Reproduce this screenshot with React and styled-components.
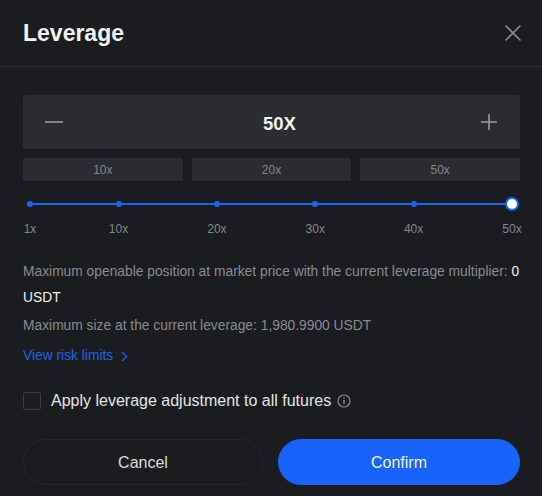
import React, { useState } from 'react'
import styled, { createGlobalStyle } from 'styled-components'

const Global = createGlobalStyle`
    html, body {
        margin: 0;
        padding: 0;
        background: #1b1c20;
    }
    body {
        font-family: "Liberation Sans", Arial, sans-serif;
        color: #e6e6e8;
    }
`

const MARKS = [1, 10, 20, 30, 40, 50]
const PRESETS = [10, 20, 50]

function Leverage() {
    const [value, setValue] = useState(50)
    const [applyAll, setApplyAll] = useState(false)
    const pct = ((value - 1) / 49) * 100

    return (
        <Modal>
            <Header>
                <Title>Leverage</Title>
                <Close aria-label='close'>
                    <svg width='16' height='16' viewBox='0 0 16 16'>
                        <path d='M1 1L15 15M15 1L1 15' stroke='#8a8b90' strokeWidth='1.6' strokeLinecap='round' />
                    </svg>
                </Close>
            </Header>
            <Body>
                <Stepper>
                    <StepBtn onClick={() => setValue(Math.max(1, value - 1))}>
                        <svg width='18' height='18' viewBox='0 0 18 18'>
                            <path d='M0 9H18' stroke='#9a9ba0' strokeWidth='1.6' />
                        </svg>
                    </StepBtn>
                    <StepValue>{value}X</StepValue>
                    <StepBtn onClick={() => setValue(Math.min(50, value + 1))}>
                        <svg width='18' height='18' viewBox='0 0 18 18'>
                            <path d='M1 9H17M9 1V17' stroke='#9a9ba0' strokeWidth='1.6' />
                        </svg>
                    </StepBtn>
                </Stepper>

                <Presets>
                    {PRESETS.map(p => (
                        <Preset key={p} onClick={() => setValue(p)}>{p}x</Preset>
                    ))}
                </Presets>

                <Slider>
                    <Track>
                        <Fill style={{ width: `${pct}%` }} />
                        {MARKS.map(m => (
                            <Tick key={m} style={{ left: `${((m - 1) / 49) * 100}%` }} />
                        ))}
                        <Thumb style={{ left: `${pct}%` }} />
                    </Track>
                    <Marks>
                        {MARKS.map(m => (
                            <Mark key={m} style={{ left: `${((m - 1) / 49) * 100}%` }}>{m}x</Mark>
                        ))}
                    </Marks>
                </Slider>

                <Info>
                    Maximum openable position at market price with the current leverage multiplier: <Strong>0</Strong> <Strong>USDT</Strong>
                </Info>
                <Size>Maximum size at the current leverage: 1,980.9900 USDT</Size>
                <RiskLink href='#'>
                    View risk limits
                    <svg width='8' height='11' viewBox='0 0 8 11'>
                        <path d='M2 1L6.5 5.5L2 10' stroke='#1b63e8' strokeWidth='1.3' fill='none' />
                    </svg>
                </RiskLink>

                <CheckRow onClick={() => setApplyAll(!applyAll)}>
                    <Box $checked={applyAll} />
                    <span>Apply leverage adjustment to all futures</span>
                    <svg width='14' height='14' viewBox='0 0 14 14'>
                        <circle cx='7' cy='7' r='6' stroke='#8a8b90' strokeWidth='1.2' fill='none' />
                        <path d='M7 6V10.2' stroke='#8a8b90' strokeWidth='1.3' />
                        <circle cx='7' cy='4' r='0.8' fill='#8a8b90' />
                    </svg>
                </CheckRow>

                <Actions>
                    <Button>Cancel</Button>
                    <Button $primary>Confirm</Button>
                </Actions>
            </Body>
        </Modal>
    )
}

const Modal = styled.div`
    width: 542px;
    height: 496px;
    background: #1b1c20;
    overflow: hidden;
`

const Header = styled.div`
    height: 67px;
    box-sizing: border-box;
    padding: 0 20px 0 23px;
    display: flex;
    align-items: center;
    justify-content: space-between;
    border-bottom: 1px solid #2c2d32;
`

const Title = styled.h2`
    margin: 0;
    font-size: 23px;
    font-weight: 700;
    color: #f2f2f3;
`

const Close = styled.button`
    background: none;
    border: 0;
    padding: 0;
    width: 18px;
    height: 18px;
    display: flex;
    align-items: center;
    justify-content: center;
    cursor: pointer;
`

const Body = styled.div`
    padding: 28px 22px 0 23px;
`

const Stepper = styled.div`
    height: 54px;
    background: #2b2c31;
    border-radius: 2px;
    display: flex;
    align-items: center;
    justify-content: space-between;
    padding: 0 22px;
`

const StepBtn = styled.button`
    background: none;
    border: 0;
    padding: 0;
    display: flex;
    cursor: pointer;
`

const StepValue = styled.div`
    font-size: 18.5px;
    font-weight: 700;
    color: #f4f4f5;
    padding: 3px 0 0 16px;
`

const Presets = styled.div`
    margin-top: 9px;
    display: grid;
    grid-template-columns: repeat(3, 1fr);
    gap: 9px;
`

const Preset = styled.button`
    height: 23px;
    border: 0;
    border-radius: 2px;
    background: #2b2c31;
    color: #85868b;
    font-family: inherit;
    font-size: 12px;
    cursor: pointer;
`

const Slider = styled.div`
    margin: 16px 8px 0 7px;
`

const Track = styled.div`
    position: relative;
    height: 14px;
    &::before {
        content: '';
        position: absolute;
        left: 0;
        right: 0;
        top: 6px;
        height: 2px;
        background: #3a3b40;
    }
`

const Fill = styled.div`
    position: absolute;
    left: 0;
    top: 6px;
    height: 2px;
    background: #1a64f5;
`

const Tick = styled.span`
    position: absolute;
    top: 4px;
    width: 6px;
    height: 6px;
    margin-left: -3px;
    border-radius: 50%;
    background: #1a64f5;
`

const Thumb = styled.span`
    position: absolute;
    top: 0;
    width: 10px;
    height: 10px;
    margin-left: -7px;
    border-radius: 50%;
    background: #fff;
    border: 2px solid #1a64f5;
`

const Marks = styled.div`
    position: relative;
    height: 16px;
    margin-top: 10px;
`

const Mark = styled.span`
    position: absolute;
    transform: translateX(-50%);
    font-size: 12px;
    line-height: 16px;
    color: #85868b;
`

const Info = styled.p`
    margin: 22px 0 0;
    font-size: 13.8px;
    line-height: 26px;
    color: #8a8b90;
`

const Strong = styled.span`
    color: #f0f0f2;
`

const Size = styled.p`
    margin: 2px 0 0;
    font-size: 13.8px;
    line-height: 26px;
    color: #8a8b90;
`

const RiskLink = styled.a`
    display: inline-flex;
    align-items: center;
    gap: 7px;
    margin-top: 4px;
    font-size: 13.8px;
    line-height: 26px;
    color: #1b63e8;
    text-decoration: none;
`

const CheckRow = styled.label`
    display: flex;
    align-items: center;
    gap: 10px;
    margin-top: 23px;
    font-size: 16px;
    color: #e4e4e6;
    cursor: pointer;
    svg { margin-left: -4px; }
`

const Box = styled.span`
    width: 16px;
    height: 16px;
    border: 1px solid #3b3c41;
    border-radius: 2px;
    background: ${p => (p.$checked ? '#1a64f5' : 'transparent')};
`

const Actions = styled.div`
    margin-top: 29px;
    display: grid;
    grid-template-columns: 240px 1fr;
    gap: 15px;
`

const Button = styled.button`
    height: 46px;
    padding-top: 3px;
    border-radius: 23px;
    font-family: inherit;
    font-size: 16px;
    cursor: pointer;
    border: 1px solid ${p => (p.$primary ? '#1763fb' : '#25262b')};
    background: ${p => (p.$primary ? '#1763fb' : 'transparent')};
    color: ${p => (p.$primary ? '#f4f6ff' : '#dcdcde')};
`

export default function App() {
    return (
        <>
            <Global />
            <Leverage />
        </>
    )
}
